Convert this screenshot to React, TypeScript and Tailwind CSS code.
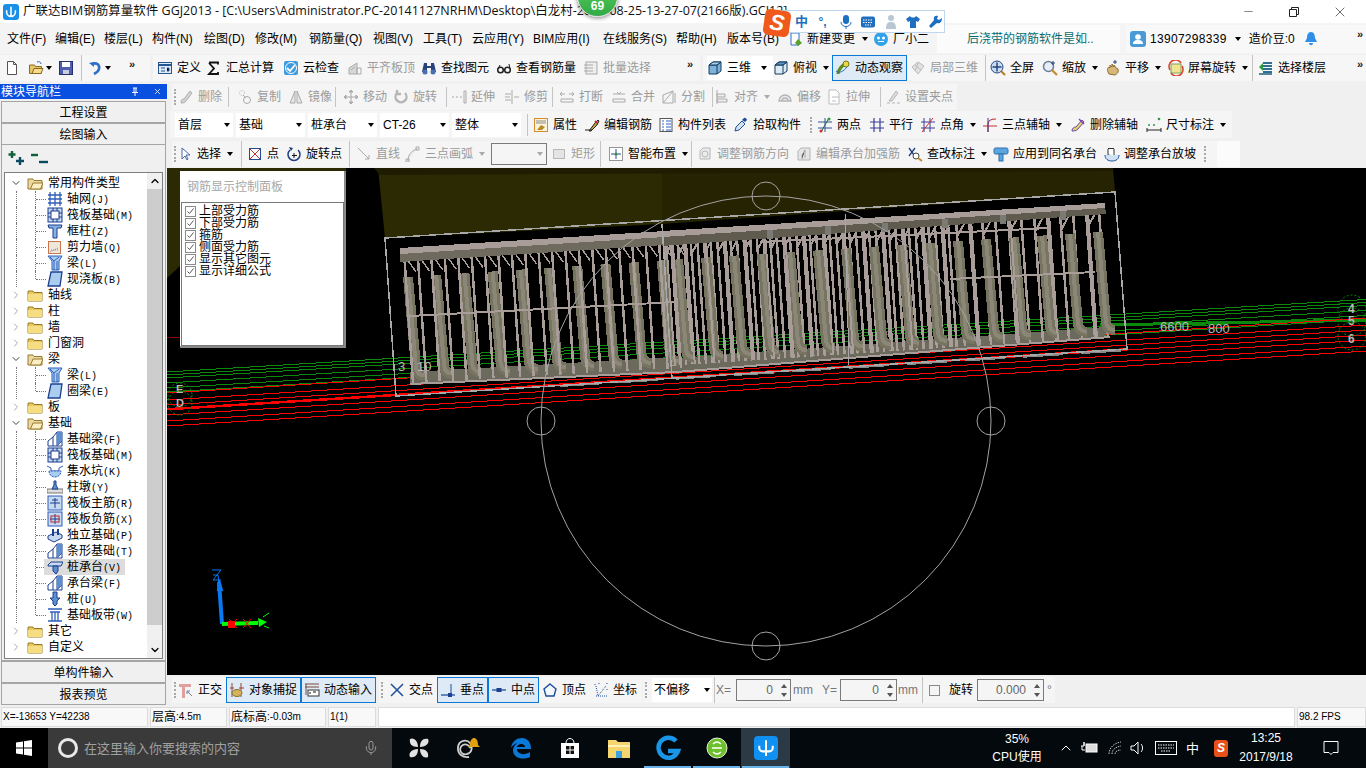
import type { ReactNode } from 'react';
import clsx from 'clsx';
import { ChevronDown, ChevronRight, ChevronUp, Mic, Minus, X } from 'lucide-react';

const B = '#2f5fb8';
const D = '#1b3f8f';

// 16x16 toolbar and tree pictures
const icons: Record<string, ReactNode> = {
  doc: <path d="M3.500 1.500h6l3 3v10h-9zM9.500 1.500v3h3" fill="#fff" stroke="#555" />,
  open: <><path d="M1.500 5h5l1 1.500h6v7h-12z" fill="#e8c56a" stroke="#8a6a20" /><path d="M4 13.500l2-5h9l-2 5z" fill="#f7dc8c" stroke="#8a6a20" /><path d="M9 2c2-1 4 0 4 2" stroke={B} fill="none" /></>,
  save: <><rect x="1.500" y="1.500" width="13" height="13" fill="#4f5fae" stroke="#27306f" /><rect x="4" y="2" width="8" height="5" fill="#fff" /><rect x="5" y="10" width="6" height="4" fill="#c9cde0" /></>,
  undo: <><path d="M5 4c5-2 8 1 7 5-.5 2-3 4-5 5" stroke="#2f6fc8" strokeWidth="2.600" fill="none" /><path d="M2 3l5-1v5z" fill="#2f6fc8" /></>,
  define: <><rect x="1.500" y="2.500" width="13" height="11" fill="#dfe9f7" stroke="#26568f" /><path d="M1.500 5h13" stroke="#26568f" strokeWidth="2" /><path d="M4 8h4M4 11h4M10 8h2v3h-2" stroke="#26568f" /></>,
  sigma: <path d="M3 2.500h9v2M12 12v2H3l5-5.500L3 3" fill="none" stroke="#111" strokeWidth="1.800" />,
  cloud: <><rect x="1" y="1" width="14" height="14" rx="2" fill="#3f9be0" /><path d="M4 8l3 3 5-6" stroke="#fff" strokeWidth="1.800" fill="none" /><circle cx="8" cy="8" r="5.500" stroke="#fff" fill="none" /></>,
  flat: <><path d="M2 14V8l8-5v11z" fill="#d8d8d8" stroke="#aaa" /><path d="M10 14V8h4v6zM4 10l4-3" stroke="#aaa" fill="none" /></>,
  bino: <><path d="M3 3h3v3h4V3h3l2 9h-5V8H6v4H1z" fill="#28427a" /><circle cx="4" cy="12" r="2.500" fill="#4a6fb0" /><circle cx="12" cy="12" r="2.500" fill="#4a6fb0" /></>,
  glass: <><circle cx="4.500" cy="10" r="2.800" fill="none" stroke="#222" strokeWidth="1.500" /><circle cx="11.500" cy="10" r="2.800" fill="none" stroke="#222" strokeWidth="1.500" /><path d="M7 9.500h2M2 9l2-4M14 9l-1-5" stroke="#222" /></>,
  batch: <><rect x="3" y="2" width="11" height="12" fill="#eee" stroke="#aaa" /><path d="M1 5h9M1 8h9M1 11h9" stroke="#aaa" /></>,
  cube: <><path d="M2 5l4-3h8v9l-4 3H2z" fill="#7fb2d9" stroke="#123a5e" /><path d="M2 5h8v9M10 5l4-3" fill="none" stroke="#123a5e" /><path d="M2 5l4-3h8l-4 3z" fill="#a8d0ec" stroke="#123a5e" /></>,
  top: <><path d="M2 5l4-3h8v9l-4 3H2z" fill="#dceaf5" stroke="#123a5e" /><path d="M2 5h8v9M10 5l4-3" fill="none" stroke="#123a5e" /><path d="M2 5l4-3h8l-4 3z" fill="#5b93c4" stroke="#123a5e" /></>,
  orbit: <><path d="M3 14c0-5 4-8 8-11" stroke="#5a8f1f" strokeWidth="3" fill="none" /><circle cx="11" cy="4" r="3" fill="#e5d84a" stroke="#7a7a10" /><path d="M1 11c3 3 8 0 11-4" stroke="#2e6db3" fill="none" /></>,
  local: <><path d="M2 7l6-5 6 4-6 8z" fill="#e2e2e2" stroke="#bbb" /><path d="M5 5l6 5M8 3l-3 8" stroke="#bbb" /></>,
  full: <><circle cx="7" cy="7" r="6" fill="#c9dcf3" stroke="#27457e" /><path d="M7 2.500v9M2.500 7h9" stroke="#27457e" strokeWidth="1.500" /><path d="M11 11l4 4" stroke="#b97a20" strokeWidth="2" /></>,
  zoom: <><circle cx="6.500" cy="6.500" r="5" fill="#e7eef7" stroke="#6c7f99" strokeWidth="1.500" /><path d="M10 10l5 5" stroke="#c28c2b" strokeWidth="2.200" /><path d="M11 1v4M9 3h4" stroke="#27457e" /></>,
  pan: <><path d="M4 14c-2-3-2-6 0-7l1 1V5l2 2V4l2 3V5l2 3 2 1c1 3-1 5-3 6z" fill="#d6b97a" stroke="#8a6e35" /><path d="M10 0v4M8 2h4" stroke="#27457e" /></>,
  rotate: <><rect x="3" y="4" width="10" height="9" fill="#f0e391" stroke="#7da65a" /><path d="M2 10a6.500 6.500 0 0 1 11-7M14 6a6.500 6.500 0 0 1-11 7" stroke="#d9412c" strokeWidth="1.500" fill="none" /></>,
  floors: <><path d="M5 3h9M5 6h9M5 9h9M5 12h9" stroke="#2f6f8f" strokeWidth="2" /><path d="M1 7l4-4v8z" fill="#2c9a3f" /><path d="M1 14h13" stroke="#1f5f7f" strokeWidth="1.500" /></>,
  del: <><path d="M3 14c0-3 1-4 3-4l6-8 2 2-6 8c-1 2-3 2-5 2z" fill="#d2d2d2" stroke="#b0b0b0" /></>,
  copy: <><circle cx="5" cy="4" r="2.500" fill="none" stroke="#bbb" strokeDasharray="1 1" /><circle cx="10" cy="11" r="3.500" fill="none" stroke="#aaa" /><path d="M6 6l3 3" stroke="#aaa" /></>,
  mirror: <path d="M7 2L2 14h5zM9 2l5 12H9z" fill="#e6e6e6" stroke="#aaa" />,
  move: <path d="M8 1v14M1 8h14M8 1L6 3h4zM8 15l-2-2h4zM1 8l2-2v4zM15 8l-2-2v4z" fill="#bbb" stroke="#aaa" />,
  spin: <path d="M4 4a5.500 5.500 0 1 0 8 0M4 1v4h4" fill="none" stroke="#b5b5b5" strokeWidth="2.400" />,
  extend: <path d="M1 8h2M5 8h2M9 8h2M13 2h2v12h-2z" stroke="#aaa" fill="#f2f2f2" />,
  trim: <path d="M1 8h5M10 8h5M8 1v14M1 5h6M1 11h6" stroke="#aaa" fill="none" />,
  brk: <path d="M2 5h4M10 5h4M3 3L1 5l2 2M13 3l2 2-2 2M2 10h12v3H2z" stroke="#aaa" fill="none" />,
  join: <path d="M2 5h12M6 3l2 2 2-2M2 10h12v3H2z" stroke="#aaa" fill="none" />,
  split: <path d="M2 14V6l10-4v12zM2 14L12 2M14 4v10" stroke="#aaa" fill="none" />,
  align: <path d="M3 1v14M3 5h8v3H3zM3 10h10v3H3z" stroke="#aaa" fill="#eee" />,
  offset: <path d="M2 12a6 6 0 1 1 12 0zM5 12a3 3 0 1 1 6 0" stroke="#b5b5b5" fill="#eee" strokeWidth="1.500" />,
  stretch: <path d="M3 1h7l3 3v11H3zM6 8h7M6 12h4" stroke="#bbb" fill="#fff" />,
  grip: <path d="M2 14h3M7 14h3M12 14h3M4 12l7-10 2 2-6 8z" stroke="#b5b5b5" fill="#ddd" />,
  prop: <><rect x="1.500" y="1.500" width="13" height="13" fill="#fdf4dc" stroke="#d98a2b" /><path d="M3 6h10M3 4l10 0" stroke="#888" /><path d="M4 13l4-5 4 2-3 3z" fill="#b98a2b" /></>,
  edit: <><path d="M1 13h7M5 14l6-8 3-3 1 1-2 4-6 6z" fill="#c4a23a" stroke="#222" /><path d="M11 4l2 2" stroke="#c62828" strokeWidth="2" /></>,
  list: <><rect x="2" y="1.500" width="12" height="13" fill="#fff" stroke="#555" /><path d="M4 4h2M4 7h2M4 10h2M4 13h2M8 4h5M8 7h5M8 10h5M8 13h5" stroke={B} /></>,
  pick: <><path d="M2 14l1-4 6-6 3 3-6 6z" fill="#cfe2f5" stroke="#21509b" /><path d="M9 3l2-2c1-1 3 1 3 2l-2 2z" fill="#21509b" /></>,
  two: <><path d="M1 11h14M1 5h14" stroke="#36539b" /><path d="M4 15L12 1" stroke="#1c6a2e" /><path d="M8 1v14" stroke="#36539b" /><circle cx="4" cy="14" r="1.500" fill="#d52a2a" /><circle cx="12" cy="2" r="1.500" fill="#2c9a3f" /></>,
  para: <path d="M5 1v14M11 1v14M1 5h14M1 11h14" stroke="#3d3d9a" strokeWidth="1.200" />,
  ang: <><path d="M4 1v14M10 1v14M1 5h14M1 11h14" stroke="#3d3d9a" fill="none" /><path d="M2 15L13 1" stroke="#d52a2a" /></>,
  arc3: <><path d="M6 15V7c0-3 3-5 8-5M1 9h14" stroke="#c53232" fill="none" strokeWidth="1.200" /><path d="M6 1v14" stroke="#3d3d9a" /></>,
  delaxis: <><path d="M2 14c0-3 2-4 4-4l6-7 2 2-6 7c-2 2-4 2-6 2z" fill="#e6ce7e" stroke="#5e4fa0" /><path d="M9 2l5 5" stroke="#8a3fb5" strokeWidth="1.500" /></>,
  dim: <><path d="M1 11v4M15 11v4M1 13h14" stroke="#222" /><circle cx="3" cy="8" r="1" fill="#2c9a3f" /><circle cx="8" cy="8" r="1" fill="#2c9a3f" /><circle cx="13" cy="2" r="1.300" fill="#2c9a3f" /></>,
  cursor: <path d="M5 2v11l3-3 2 4 1-1-2-4h4z" fill="#fff" stroke="#4b6ca8" />,
  pt: <><rect x="2.500" y="2.500" width="11" height="11" fill="#fff" stroke="#2a4a94" /><path d="M3 3l10 10M13 3L3 13" stroke="#c53232" /></>,
  rotpt: <><path d="M4 4a6 6 0 1 0 8 0" stroke="#1f3f80" fill="none" strokeWidth="1.500" /><path d="M8 7v5M6 9.500h5" stroke="#111" /><path d="M3 1l2 4 2-3z" fill="#1f3f80" /></>,
  line: <path d="M2 2l11 11M13 13V9M13 13H9" stroke="#aaa" fill="none" />,
  arc: <path d="M3 15c0-6 3-10 9-12M11 1h3v3h-3zM1 13h3v3H1z" stroke="#aaa" fill="#eee" />,
  rect: <rect x="2.500" y="3.500" width="11" height="9" fill="#e4e4e4" stroke="#b8b8b8" />,
  smart: <><rect x="1.500" y="1.500" width="13" height="13" fill="#fff" stroke="#333" strokeDasharray="1 1" /><path d="M8 3v10M3 8h10" stroke="#2a4a94" /><circle cx="8" cy="8" r="1.500" fill="#2c9a3f" /></>,
  adj: <><path d="M3 5l3-3h7v11H3z" fill="#ececec" stroke="#b5b5b5" /><circle cx="8" cy="8" r="3" fill="none" stroke="#b5b5b5" /></>,
  adj2: <><path d="M2 5l3-3h9v12H2z" fill="#e5e5e5" stroke="#b5b5b5" /><path d="M9 4L6 9v4M9 4v8" stroke="#aaa" /></>,
  check: <><path d="M2 2l5 7M8 2L2 10" stroke="#1f3f80" strokeWidth="1.300" /><circle cx="9" cy="10" r="3" fill="#fff" stroke="#444" /><path d="M11 12l4 3" stroke="#c28c2b" strokeWidth="2" /></>,
  apply: <><rect x="1" y="2" width="14" height="6" rx="1.500" fill="#5ba6e0" stroke="#2f6fa8" /><rect x="6" y="8" width="4" height="7" fill="#5ba6e0" stroke="#2f6fa8" /></>,
  slope: <><path d="M4 9V3l1-1 1 1 1-1 1 1 1-1 1 1v7z" fill="#fff" stroke="#333" /><path d="M1 9c0 4 3 6 7 6s7-2 7-6" fill="#cfe2f5" stroke="#21509b" /></>,
  ortho: <><path d="M1 2h12v3H7v11H4V5H1z" fill="#e0a0a0" /><path d="M9 9l5 5M9 9h3M9 9v3" stroke="#6e7fa0" /></>,
  snap: <><path d="M3 1v14M12 1v14" stroke="#8a4a2a" /><ellipse cx="8" cy="11" rx="5" ry="3.500" fill="#d4b35a" stroke="#8a6e35" /><path d="M1 6h4M10 6h5" stroke="#b03030" /></>,
  dyn: <><path d="M1 2h14M1 5h14M2 2v11" stroke="#7a4a3a" fill="none" /><rect x="4" y="8" width="11" height="6" fill="#fff" stroke="#333" /><path d="M6 10v2M9 10h3" stroke="#111" /></>,
  cross: <path d="M2 2l12 12M14 2L2 14" stroke="#1c4f9c" strokeWidth="1.500" />,
  perp: <><path d="M1 13h14" stroke="#1c4f9c" strokeWidth="1.300" /><path d="M11 2v13" stroke="#1c4f9c" /><rect x="8" y="11" width="4" height="4" fill="#1c3f90" /></>,
  mid: <><path d="M1 8h14" stroke="#1c4f9c" strokeWidth="1.300" /><rect x="5.500" y="6" width="5" height="4" fill="#1c3f90" /></>,
  vert: <path d="M8 2l6 5-2 7H4L2 7z" fill="#f2f7fd" stroke="#1c4f9c" strokeWidth="1.400" />,
  coord: <path d="M2 2v2M6 1v1M14 1v2M14 7v1M3 14h12M5 14l8-10M3 4l2 10" stroke="#1c4f9c" strokeDasharray="1 1" fill="none" />,
  gridBlue: <path d="M1 4h14M1 8h14M1 12h14M3 1v14M8 1v14M13 1v14" stroke={B} strokeWidth="1.300" />,
  raft: <><rect x="1" y="1" width="14" height="14" fill="#c8d9f0" stroke={D} /><rect x="4" y="4" width="8" height="8" fill="#fff" stroke={D} /><path d="M1 6h3M1 10h3M12 6h3M12 10h3M6 1v3M10 1v3M6 12v3M10 12v3" stroke={D} /></>,
  col: <path d="M1 2h14l-1 3H10v10H6V5H2z" fill="#86b2e2" stroke={D} />,
  wall: <><rect x="1.500" y="2.500" width="12" height="12" fill="#efe6dc" stroke="#c9744a" /><path d="M3 13l8-4M4 11h7" stroke="#888" strokeDasharray="1 1" /></>,
  beam: <><path d="M1 1h14l-3 5v9H5V6z" fill="#a9cdf0" stroke={B} /><path d="M7 6v9M10 6v9M3 2l4 4M12 2L7 6" stroke={B} /></>,
  slab: <path d="M4 1h11l-2 14H1z" fill="#a9cdf0" stroke={D} strokeWidth="1.300" />,
  fbeam: <><path d="M1 15V10l5-4 4-5h5v14z" fill="#fff" stroke={D} /><path d="M6 6v9M10 1v14l5-5" stroke={D} fill="none" /><path d="M10 1h5v9l-5 5z" fill="#5d8fcf" /></>,
  pit: <><path d="M0 3l4 2v3h8V5l4-2" fill="none" stroke={B} /><path d="M2 8c0 4 3 6 6 6s6-2 6-6z" fill="#a9cdf0" stroke={B} strokeDasharray="2 1" /></>,
  pier: <><rect x="0" y="10" width="16" height="4" fill="#ddd" stroke="#777" /><path d="M5 10l2-4V2h2v4l2 4z" fill="#5d8fcf" stroke={D} /></>,
  rmain: <><rect x="1" y="1" width="14" height="14" fill="#c8d9f0" stroke={B} /><path d="M3 8h10M8 3v10M5 5h6" stroke={D} /></>,
  rneg: <><rect x="1" y="1" width="14" height="14" fill="#c8d9f0" stroke={B} /><path d="M3 8h10M8 3v10" stroke={D} /><rect x="4" y="5" width="8" height="6" fill="none" stroke="#b03030" /></>,
  iso: <><path d="M1 9l8-4 6 3v3l-8 4-6-3z" fill="#c8d9f0" stroke={D} /><path d="M6 2v7M11 2v6" stroke={D} strokeWidth="2" /></>,
  cap: <><path d="M1 6l3-3h12l-2 4H1z" fill="#c8d9f0" stroke={D} /><path d="M6 7h5v5l-2 3-3-3z" fill="#5d8fcf" stroke={D} /></>,
  pile: <><path d="M6 1h4v6h3l-3 3v3l-2 2-2-2v-3L3 7h3z" fill="#5d8fcf" stroke={D} /></>,
  band: <path d="M1 2h14M1 14h14M3 5h10M5 5v9M11 5v9M8 5v9" stroke={B} strokeWidth="1.300" />,
};

function Ic({ n }: { n: string }) {
  return (
    <svg viewBox="0 0 16 16" className="w-4 h-4 shrink-0">
      {icons[n]}
    </svg>
  );
}

function Caret({ off }: { off?: boolean }) {
  return <span className={clsx('ml-[2px] w-0 h-0 shrink-0 border-x-[3px] border-x-transparent border-t-[4px]', off ? 'border-t-[#aaa]' : 'border-t-black')} />;
}

function Tool({ i, t, w, off, caret, on }: { i: string; t: string; w: string; off?: boolean; caret?: boolean; on?: boolean }) {
  return (
    <div
      className={clsx(
        'flex items-center gap-[4px] shrink-0 h-full whitespace-nowrap',
        w,
        off ? 'text-[#9b9b9b]' : 'text-black',
        on && 'border border-[#0a78d7] bg-[#deeaf6] pl-[2px]',
      )}
    >
      <Ic n={i} />
      <span>{t}</span>
      {caret && <Caret off={off} />}
    </div>
  );
}

function Sep({ w }: { w: string }) {
  return (
    <div className={clsx('shrink-0 h-full', w)}>
      <div className="w-px h-full bg-[#c4c4c4]" />
    </div>
  );
}

function Handle({ w }: { w: string }) {
  return (
    <div className={clsx('shrink-0 flex items-center', w)}>
      <div className="ml-[2px] w-[2px] h-[16px] border-l-2 border-dotted border-[#a8a8a8]" />
    </div>
  );
}

function Combo({ t, w }: { t: string; w: string }) {
  return (
    <div className={clsx('flex items-center justify-between bg-white h-[24px] pl-[3px] pr-[3px] shrink-0', w)}>
      <span>{t}</span>
      <Caret />
    </div>
  );
}

function More({ w }: { w: string }) {
  return <div className={clsx('shrink-0 text-[11px] leading-none font-bold text-[#222] -mt-[8px] text-right', w)}>»</div>;
}

function TitleBar() {
  return (
    <div className="h-[23px] bg-white flex items-center shrink-0 relative overflow-hidden">
      <div className="ml-[3px] w-[16px] h-[16px] rounded-[3px] bg-[#1a8fe8] flex items-center justify-center">
        <svg viewBox="0 0 16 16" className="w-[14px] h-[14px]">
          <path d="M8 2v12M3 6v2a3 3 0 0 0 10 0V6" stroke="#fff" strokeWidth="1.800" fill="none" />
        </svg>
      </div>
      <span className="ml-[4px] text-[12.5px] text-[#111] whitespace-nowrap [font-family:'Open_Sans','Noto_Sans_CJK_SC',sans-serif]">
        广联达BIM钢筋算量软件 GGJ2013 - [C:\Users\Administrator.PC-20141127NRHM\Desktop\白龙村-2017-08-25-13-27-07(2166版).GCJ12]
      </span>
      <div className="ml-auto flex items-center text-[#222]">
        <div className="w-[46px] flex justify-center"><Minus size={13} strokeWidth={1} /></div>
        <div className="w-[46px] flex justify-center">
          <svg viewBox="0 0 12 12" className="w-[12px] h-[12px]">
            <path d="M1.500 3.500h7v7h-7zM3.500 3.500v-2h7v7h-2" fill="none" stroke="#222" />
          </svg>
        </div>
        <div className="w-[46px] mr-[3px] flex justify-center"><X size={16} strokeWidth={1} /></div>
      </div>
    </div>
  );
}

const menus: [string, string][] = [
  ['文件(F)', 'w-[48px]'], ['编辑(E)', 'w-[49px]'], ['楼层(L)', 'w-[48px]'], ['构件(N)', 'w-[52px]'],
  ['绘图(D)', 'w-[51px]'], ['修改(M)', 'w-[54px]'], ['钢筋量(Q)', 'w-[64px]'], ['视图(V)', 'w-[50px]'],
  ['工具(T)', 'w-[49px]'], ['云应用(Y)', 'w-[61px]'], ['BIM应用(I)', 'w-[70px]'], ['在线服务(S)', 'w-[73px]'],
  ['帮助(H)', 'w-[51px]'], ['版本号(B)', 'w-[60px]'],
];

function MenuBar() {
  return (
    <div className="h-[31px] bg-[#f4f4f4] flex items-center shrink-0 pl-[7px]">
      {menus.map(([t, w]) => (
        <div key={t} className={clsx('shrink-0 whitespace-nowrap', w)}>{t}</div>
      ))}
      <div className="flex items-center w-[84px] shrink-0 pl-[1px]">
        <svg viewBox="0 0 16 16" className="w-4 h-4 shrink-0">
          <path d="M3 2h8v12H3z" fill="#fff" stroke="#2f6fc8" />
          <path d="M10 8l4 4-4 3-3-3z" fill="#5aa02c" />
        </svg>
        <span className="ml-[3px] whitespace-nowrap">新建变更</span>
        <span className="ml-[5px] flex"><Caret /></span>
      </div>
      <svg viewBox="0 0 16 16" className="w-4 h-4 shrink-0 ml-[2px]">
        <circle cx="8" cy="8" r="7" fill="#31a3e8" />
        <circle cx="5.500" cy="7" r="1.500" fill="#fff" />
        <circle cx="10.500" cy="7" r="1.500" fill="#fff" />
        <path d="M5 10.500h6" stroke="#fff" />
      </svg>
      <span className="ml-[4px] w-[39px] shrink-0">厂小二</span>
      <div className="flex items-center h-[28px] w-[183px] ml-[5px] bg-white/60 text-[#0a6b70] pl-[30px] whitespace-nowrap shrink-0">
        后浇带的钢筋软件是如..
      </div>
      <div className="flex items-center h-[28px] ml-[6px] pl-[4px] bg-[#f8f8f8] w-[240px] shrink-0">
        <svg viewBox="0 0 16 16" className="w-4 h-4 shrink-0">
          <rect width="16" height="16" rx="3" fill="#4a9ad8" />
          <circle cx="8" cy="6" r="2.800" fill="#fff" />
          <path d="M3 13c0-3 2-4 5-4s5 1 5 4z" fill="#fff" />
        </svg>
        <span className="ml-[4px] tracking-[0.3px]">13907298339</span>
        <span className="ml-[6px] flex"><Caret /></span>
        <span className="ml-[8px] whitespace-nowrap">造价豆:0</span>
        <svg viewBox="0 0 16 16" className="w-4 h-4 shrink-0 ml-[8px]">
          <path d="M8 1c3 0 4 3 4 6l2 4H2l2-4c0-3 1-6 4-6zM6 12h4c0 3-4 3-4 0z" fill="#2f8fe8" />
        </svg>
        <More w="ml-auto w-[12px] mr-[3px]" />
      </div>
    </div>
  );
}

function MainToolbar() {
  return (
    <div className="h-[28px] flex items-center shrink-0 bg-[#f0f0f0]">
      <div className="h-[26px] w-[150px] flex items-center bg-[#f6f6f6] pl-[4px] shrink-0">
        <div className="w-[24px]"><Ic n="doc" /></div>
        <Ic n="open" />
        <Caret />
        <div className="ml-[6px] w-[17px]"><Ic n="save" /></div>
        <div className="ml-[6px] w-[6px] h-full"><div className="w-px h-full bg-[#c4c4c4]" /></div>
        <Ic n="undo" />
        <Caret />
        <More w="w-[24px]" />
      </div>
      <div className="h-[26px] ml-[3px] flex items-center bg-[#f6f6f6] pl-[4px] w-[547px] shrink-0">
        <Tool i="define" t="定义" w="w-[49px]" />
        <Tool i="sigma" t="汇总计算" w="w-[77px]" />
        <Tool i="cloud" t="云检查" w="w-[64px]" />
        <Tool i="flat" t="平齐板顶" w="w-[74px]" off />
        <Tool i="bino" t="查找图元" w="w-[75px]" />
        <Tool i="glass" t="查看钢筋量" w="w-[87px]" />
        <Tool i="batch" t="批量选择" w="w-[72px]" off />
        <More w="w-[38px]" />
      </div>
      <div className="h-[26px] ml-[3px] flex items-center bg-[#f6f6f6] pl-[4px] flex-1">
        <div className="flex items-center bg-white h-[24px] w-[66px] shrink-0">
          <Tool i="cube" t="三维" w="w-[52px]" />
          <Caret />
        </div>
        <Tool i="top" t="俯视" w="w-[59px]" caret />
        <Tool i="orbit" t="动态观察" w="w-[75px]" on />
        <div className="w-[3px] shrink-0" />
        <Tool i="local" t="局部三维" w="w-[75px]" off />
        <Sep w="w-[5px]" />
        <Tool i="full" t="全屏" w="w-[52px]" />
        <Tool i="zoom" t="缩放" w="w-[63px]" caret />
        <Tool i="pan" t="平移" w="w-[63px]" caret />
        <Tool i="rotate" t="屏幕旋转" w="w-[84px]" caret />
        <Sep w="w-[6px]" />
        <Tool i="floors" t="选择楼层" w="w-[90px]" />
        <More w="w-[15px]" />
      </div>
    </div>
  );
}

function EditRow() {
  return (
    <div className="h-[28px] shrink-0 pl-[5px] flex items-end">
      <div className="h-[26px] w-[785px] flex items-center bg-[#f5f5f5] py-[3px]">
        <Handle w="w-[6px]" />
        <Tool i="del" t="删除" w="w-[50px]" off />
        <Sep w="w-[9px]" />
        <Tool i="copy" t="复制" w="w-[51px]" off />
        <Tool i="mirror" t="镜像" w="w-[47px]" off />
        <Sep w="w-[8px]" />
        <Tool i="move" t="移动" w="w-[50px]" off />
        <Tool i="spin" t="旋转" w="w-[53px]" off />
        <Sep w="w-[5px]" />
        <Tool i="extend" t="延伸" w="w-[53px]" off />
        <Tool i="trim" t="修剪" w="w-[48px]" off />
        <Sep w="w-[7px]" />
        <Tool i="brk" t="打断" w="w-[52px]" off />
        <Tool i="join" t="合并" w="w-[50px]" off />
        <Tool i="split" t="分割" w="w-[51px]" off />
        <Sep w="w-[2px]" />
        <Tool i="align" t="对齐" w="w-[63px]" off caret />
        <Tool i="offset" t="偏移" w="w-[49px]" off />
        <Tool i="stretch" t="拉伸" w="w-[54px]" off />
        <Sep w="w-[5px]" />
        <Tool i="grip" t="设置夹点" w="w-[72px]" off />
      </div>
    </div>
  );
}

function SelectRow() {
  return (
    <div className="h-[28px] shrink-0 pl-[3px] flex items-end">
      <div className="h-[27px] w-[638px] flex items-center bg-[#f5f5f5] pl-[5px] shrink-0">
        <div className="flex items-center gap-[3px] shrink-0">
          <Combo t="首层" w="w-[58px]" />
          <Combo t="基础" w="w-[69px]" />
          <Combo t="桩承台" w="w-[69px]" />
          <Combo t="CT-26" w="w-[69px]" />
          <Combo t="整体" w="w-[69px]" />
        </div>
        <div className="w-[6px] shrink-0" />
        <div className="h-[22px] flex items-center"><Sep w="w-[6px]" /></div>
        <Tool i="prop" t="属性" w="w-[51px]" />
        <Tool i="edit" t="编辑钢筋" w="w-[74px]" />
        <Tool i="list" t="构件列表" w="w-[75px]" />
        <Tool i="pick" t="拾取构件" w="w-[75px]" />
      </div>
      <div className="h-[27px] w-[424px] flex items-center bg-[#f5f5f5] shrink-0">
        <Handle w="w-[9px]" />
        <Tool i="two" t="两点" w="w-[52px]" />
        <Tool i="para" t="平行" w="w-[51px]" />
        <Tool i="ang" t="点角" w="w-[62px]" caret />
        <Tool i="arc3" t="三点辅轴" w="w-[88px]" caret />
        <Tool i="delaxis" t="删除辅轴" w="w-[76px]" />
        <Tool i="dim" t="尺寸标注" w="w-[84px]" caret />
      </div>
    </div>
  );
}

function DrawRow() {
  return (
    <div className="h-[30px] shrink-0 pl-[5px] pt-[2px] flex items-center">
      <div className="h-[26px] w-[1045px] flex items-center bg-[#f5f5f5] shrink-0">
        <Handle w="w-[5px]" />
        <Tool i="cursor" t="选择" w="w-[64px]" caret />
        <Sep w="w-[6px]" />
        <Tool i="pt" t="点" w="w-[39px]" />
        <Tool i="rotpt" t="旋转点" w="w-[63px]" />
        <Sep w="w-[7px]" />
        <Tool i="line" t="直线" w="w-[49px]" off />
        <Tool i="arc" t="三点画弧" w="w-[86px]" off caret />
        <div className="w-[56px] h-[22px] border border-[#7a7a7a] flex items-center justify-end pr-[3px] shrink-0"><Caret off /></div>
        <div className="w-[4px] shrink-0" />
        <Tool i="rect" t="矩形" w="w-[49px]" off />
        <Sep w="w-[8px]" />
        <Tool i="smart" t="智能布置" w="w-[83px]" caret />
        <Sep w="w-[6px]" />
        <Tool i="adj" t="调整钢筋方向" w="w-[99px]" off />
        <Tool i="adj2" t="编辑承台加强筋" w="w-[111px]" off />
        <Tool i="check" t="查改标注" w="w-[86px]" caret />
        <Tool i="apply" t="应用到同名承台" w="w-[111px]" />
        <Tool i="slope" t="调整承台放坡" w="w-[98px]" />
        <Handle w="w-[10px]" />
      </div>
      <div className="w-[23px] h-[26px] bg-white/70 shrink-0" />
    </div>
  );
}

type Row = { t: string; k?: string; i?: string; open?: boolean; lvl: 0 | 1; last?: boolean; sel?: boolean };

const tree: Row[] = [
  { t: '常用构件类型', lvl: 0, open: true },
  { t: '轴网', k: '(J)', i: 'gridBlue', lvl: 1 },
  { t: '筏板基础', k: '(M)', i: 'raft', lvl: 1 },
  { t: '框柱', k: '(Z)', i: 'col', lvl: 1 },
  { t: '剪力墙', k: '(Q)', i: 'wall', lvl: 1 },
  { t: '梁', k: '(L)', i: 'beam', lvl: 1 },
  { t: '现浇板', k: '(B)', i: 'slab', lvl: 1, last: true },
  { t: '轴线', lvl: 0 }, { t: '柱', lvl: 0 }, { t: '墙', lvl: 0 }, { t: '门窗洞', lvl: 0 },
  { t: '梁', lvl: 0, open: true },
  { t: '梁', k: '(L)', i: 'beam', lvl: 1 },
  { t: '圈梁', k: '(E)', i: 'slab', lvl: 1, last: true },
  { t: '板', lvl: 0 },
  { t: '基础', lvl: 0, open: true },
  { t: '基础梁', k: '(F)', i: 'fbeam', lvl: 1 },
  { t: '筏板基础', k: '(M)', i: 'raft', lvl: 1 },
  { t: '集水坑', k: '(K)', i: 'pit', lvl: 1 },
  { t: '柱墩', k: '(Y)', i: 'pier', lvl: 1 },
  { t: '筏板主筋', k: '(R)', i: 'rmain', lvl: 1 },
  { t: '筏板负筋', k: '(X)', i: 'rneg', lvl: 1 },
  { t: '独立基础', k: '(P)', i: 'iso', lvl: 1 },
  { t: '条形基础', k: '(T)', i: 'fbeam', lvl: 1 },
  { t: '桩承台', k: '(V)', i: 'cap', lvl: 1, sel: true },
  { t: '承台梁', k: '(F)', i: 'fbeam', lvl: 1 },
  { t: '桩', k: '(U)', i: 'pile', lvl: 1 },
  { t: '基础板带', k: '(W)', i: 'band', lvl: 1, last: true },
  { t: '其它', lvl: 0 },
  { t: '自定义', lvl: 0 },
];

function Folder({ open }: { open?: boolean }) {
  return (
    <svg viewBox="0 0 16 16" className="w-4 h-4 shrink-0">
      <path d="M1 4h5l1 1.500h8V14H1z" fill={open ? '#ecd9a0' : '#e9c65f'} stroke="#9a7a2c" />
      {open ? <path d="M3.500 14L6 8h10l-2.500 6z" fill="#fbeec2" stroke="#9a7a2c" /> : <path d="M1 7h14v7H1z" fill="#f6dc83" />}
    </svg>
  );
}

function TreeRow({ r }: { r: Row }) {
  if (r.lvl === 1) {
    return (
      <div className="h-4 flex items-center relative">
        <div className="absolute left-[11px] top-0 h-full border-l border-dotted border-[#777]" />
        <div className={clsx('absolute left-[30px] top-0 border-l border-dotted border-[#777]', r.last ? 'h-[8px]' : 'h-full')} />
        <div className="absolute left-[31px] top-[8px] w-[10px] border-t border-dotted border-[#777]" />
        {r.sel && <div className="absolute left-[39px] top-0 w-[81px] h-4 bg-[#dcdcdc]" />}
        <div className="ml-[42px] flex items-center h-4 gap-[4px] shrink-0 relative">
          <Ic n={r.i!} />
          <span className="whitespace-nowrap">
            {r.t}
            <span className="text-[10px] [font-family:'Liberation_Mono',monospace]">{r.k}</span>
          </span>
        </div>
      </div>
    );
  }
  const Chev = r.open ? ChevronDown : ChevronRight;
  return (
    <div className="h-4 flex items-center">
      <div className="w-[22px] pl-[5px] shrink-0">
        <Chev size={12} strokeWidth={2} className={r.open ? 'text-[#444]' : 'text-[#a8a8a8]'} />
      </div>
      <Folder open={r.open} />
      <span className="ml-[5px] whitespace-nowrap">{r.t}</span>
    </div>
  );
}

function PanelBtn({ t }: { t: string }) {
  return <div className="h-[22px] mx-[1px] pt-[1px] border border-[#a5a5a5] bg-[#f0f0f0] flex items-center justify-center shrink-0">{t}</div>;
}

function LeftPanel() {
  return (
    <div className="w-[167px] shrink-0 flex flex-col pt-[2px]">
      <div className="h-[15px] bg-[#0a50e0] text-white flex items-center pl-[1px] shrink-0 text-[12px]">
        <span>模块导航栏</span>
        <svg viewBox="0 0 10 10" className="ml-auto mr-[13px] w-[10px] h-[10px]">
          <path d="M3 1h4M4 1v4M6 1v4M2 5.500h6M5 5.500V9" stroke="#fff" fill="none" />
        </svg>
        <X size={9} className="mr-[5px]" />
      </div>
      <div className="h-[2px] shrink-0" />
      <PanelBtn t="工程设置" />
      <PanelBtn t="绘图输入" />
      <div className="mx-[1px] border border-[#a5a5a5] border-t-0 bg-[#f0f0f0] flex-1 flex flex-col min-h-0 px-[2px]">
        <div className="h-[27px] shrink-0 flex items-center pl-[3px] gap-[3px]">
          <svg viewBox="0 0 20 20" className="w-[20px] h-[20px]">
            <path d="M5 2v7M1.500 5.500h7" stroke="#0f5f3a" strokeWidth="2.400" />
            <path d="M13 8v8M9 12h8" stroke="#0a4a5f" strokeWidth="2.400" />
          </svg>
          <svg viewBox="0 0 20 20" className="w-[20px] h-[20px]">
            <path d="M1 6h7" stroke="#0f5f3a" strokeWidth="2.400" />
            <path d="M9 13h9" stroke="#0a4a5f" strokeWidth="2.400" />
          </svg>
        </div>
        <div className="flex-1 min-h-0 flex border border-[#7f7f7f] bg-white overflow-hidden">
          <div className="flex-1 min-w-0 overflow-hidden pt-[2px]">
            {tree.map((r, idx) => (
              <TreeRow key={idx} r={r} />
            ))}
          </div>
          <div className="w-[15px] shrink-0 flex flex-col bg-[#f0f0f0]">
            <div className="h-[16px] flex items-center justify-center"><ChevronUp size={12} strokeWidth={2.500} /></div>
            <div className="flex-1 bg-[#cdcdcd]" />
            <div className="h-[17px] mt-[16px] flex items-center justify-center"><ChevronDown size={12} strokeWidth={2.500} /></div>
          </div>
        </div>
        <div className="h-[1px] shrink-0" />
      </div>
      <PanelBtn t="单构件输入" />
      <PanelBtn t="报表预览" />
    </div>
  );
}

const leftTubes = Array.from({ length: 10 }, (_, i) => 408 + i * 28.2);
const rightTubes = Array.from({ length: 16 }, (_, i) => 678 + i * 28);
const leftBars = Array.from({ length: 21 }, (_, i) => 404 + i * 13.4);
const rightBars = [
  ...Array.from({ length: 44 }, (_, i) => 664 + i * 6.6),
  ...Array.from({ length: 12 }, (_, i) => 956 + i * 13),
];

const topL = (x: number) => 252 - (x - 400) * 0.064;
const botL = (x: number) => 383 - (x - 410) * 0.056;
const topR = (x: number) => 236 - (x - 662) * 0.0645;
const botR = (x: number) => 360 - (x - 760) * 0.066;
const red = [393, 400, 405, 410, 415, 421, 426];
const green = [372, 375, 378, 383, 388, 392];

function Cage() {
  const st = { stroke: '#a89d98', fill: 'none' };
  const tube = (x: number, i: number) => {
    const isLeft = i < leftTubes.length;
    const yt = 277 - (x - 408) * 0.0653;
    const yb = (isLeft ? botL(x + 12) : botR(x + 12)) - 7;
    const d = `M${x} ${yt} L${x + 8} ${yb - 8} Q${x + 9} ${yb} ${x + 17} ${yb}`;
    return (
      <g key={x}>
        <path d={d} fill="none" stroke="#77745f" strokeWidth={10} />
        <path d={d} fill="none" stroke="#8a8779" strokeWidth={4} />
      </g>
    );
  };
  return (
    <g shapeRendering="crispEdges">
      <polygon points="410,372 676,357 676,372 410,384" fill="#6b6a5c" />
      <polygon points="676,358 1106,327 1106,338 676,372" fill="#6b6a5c" />
      {rightBars.map((x, i) => (
        <g key={i}>
          <line x1={x} y1={topR(x) + 3} x2={x + 9} y2={botR(x + 9)} strokeWidth={2.500} {...st} />
          {i % 2 === 0 && <line x1={x + 1} y1={topR(x) + 20} x2={x + 9} y2={topR(x) + 5} strokeWidth={2} {...st} />}
        </g>
      ))}
      {[...leftTubes, ...rightTubes].map(tube)}
      {leftBars.map((x, i) => (
        <g key={i}>
          <line x1={x} y1={topL(x)} x2={x + 9} y2={botL(x + 9)} strokeWidth={2.500} {...st} />
          <line x1={x + 12} y1={topL(x) + 20} x2={x + 2} y2={topL(x) + 6} strokeWidth={1.500} {...st} />
        </g>
      ))}
      {rightBars.map((x, i) =>
        i % 3 === 0 ? <line key={i} x1={x + 2} y1={topR(x) + 3} x2={x + 11} y2={botR(x + 11)} strokeWidth={2} {...st} /> : null,
      )}
      <line x1={410} y1={316} x2={675} y2={302} stroke="#a89d98" strokeWidth={2} />
      <line x1={950} y1={279} x2={1095} y2={272} stroke="#a89d98" strokeWidth={2} />
      <line x1={760} y1={242} x2={1050} y2={228} stroke="#a89d98" strokeWidth={2} />
      <polygon points="400,251 680,233 680,244 400,262" fill="#6e6b5e" />
      <polygon points="400,248 680,230 680,236 400,254" fill="#a89d98" />
      <polygon points="662,234 1105,205 1106,214 662,246" fill="#5f5c4f" />
      <polygon points="662,231 1105,203 1105,208 662,237" fill="#a89d98" />
      {[770, 828, 885, 945, 1003, 1063].map((x) => (
        <rect key={x} x={x - 3} y={235 - (x - 770) * 0.0645 - 5} width={6} height={9} fill="#7c7a74" />
      ))}
      <line x1={410} y1={384} x2={676} y2={372} stroke="#a89d98" strokeWidth={2} />
      <line x1={676} y1={372} x2={1110} y2={337} stroke="#a89d98" strokeWidth={2} />
    </g>
  );
}

function Scene() {
  return (
    <svg viewBox="167 168 1199 507" className="w-full h-full block">
      <polygon points="167,168 346,168 346,172 180,266 167,278" fill="#2c2a03" />
      <polygon points="378,168 662,168 662,224 385,238" fill="#2c2a03" />
      <polygon points="662,168 1113,168 1115,192 662,224" fill="#252302" />
      <polygon points="374,168 1113,168 1113,171 380,175" fill="#1e1d02" />
      <g shapeRendering="crispEdges">
        <line x1={167} y1={338} x2={180} y2={337} stroke="#8a0000" />
        {green.map((y) => (
          <line key={y} x1={167} y1={y} x2={1366} y2={y - 1199 * 0.0605} stroke="#0a8a0a" />
        ))}
        <line x1={1100} y1={325} x2={1366} y2={320} stroke="#0a8a0a" strokeWidth={3} />
        {red.map((y) => (
          <line key={y} x1={167} y1={y} x2={1366} y2={y - 1199 * 0.0625} stroke="#ff0000" />
        ))}
        <line x1={167} y1={409} x2={1127} y2={349} stroke="#ff0000" strokeWidth={2} />
        <line x1={560} y1={386} x2={1130} y2={350} stroke="#8a8a8a" strokeWidth={2} strokeDasharray="40 18" />
      </g>
      <Cage />
      <g fill="none" stroke="#a8a8a8" shapeRendering="crispEdges">
        <polygon points="385,238 1115,192 1127,349 396,396" strokeWidth={1.500} />
        <line x1={662} y1={224} x2={672} y2={379} strokeWidth={1.500} />
        <line x1={845} y1={213} x2={849} y2={365} />
      </g>
      <g fill="none" stroke="#a2a2a2">
        <circle cx={766} cy={421} r={225} />
        <circle cx={766} cy={196} r={14} />
        <circle cx={766} cy={646} r={14} />
        <circle cx={541} cy={421} r={14} />
        <circle cx={991} cy={421} r={14} />
      </g>
      <g fontFamily="'Liberation Sans',sans-serif" fontSize="13" fill="#b8b8b8">
        <text x={1160} y={331}>6600</text>
        <text x={1208} y={333}>800</text>
        <text x={398} y={371}>3</text>
        <text x={417} y={371}>10</text>
        <text x={176} y={393} fontSize="11" fontWeight="bold">E</text>
        <text x={176} y={407} fontSize="11" fontWeight="bold">D</text>
        <text x={1348} y={313} fontSize="12" fontWeight="bold">4</text>
        <text x={1348} y={325} fontSize="12" fontWeight="bold">5</text>
        <text x={1348} y={343} fontSize="12" fontWeight="bold">6</text>
      </g>
      <g fill="none" stroke="#0a8a0a" strokeDasharray="2 2">
        <circle cx={180} cy={395} r={12} />
        <circle cx={180} cy={403} r={12} />
        <circle cx={1352} cy={309} r={14} />
        <circle cx={1352} cy={322} r={14} />
        <circle cx={1352} cy={336} r={14} />
      </g>
      {/* axis gizmo */}
      <path d="M219 582l-1-7h-5M212 570h9l-8 10h8" stroke="#0a78f0" fill="none" />
      <path d="M222 624l-3-42" stroke="#0a78f0" strokeWidth={4} />
      <path d="M218 590l1-10 3 10z" fill="#0a78f0" stroke="#0a78f0" strokeWidth={2} />
      <path d="M222 624l36-1" stroke="#00ff00" strokeWidth={4} />
      <path d="M258 618l9 4-8 5z" fill="#00ff00" />
      <path d="M263 617l6-4M264 626l5 2" stroke="#00ff00" />
      <path d="M229 619l8 9M237 619l-8 9M243 619l8 9M251 619l-8 9" stroke="#ff0000" />
      <rect x={228} y={621} width={7} height={7} fill="#ff0000" />
    </svg>
  );
}

const checks = ['上部受力筋', '下部受力筋', '箍筋', '侧面受力筋', '显示其它图元', '显示详细公式'];

function RebarPanel() {
  return (
    <div className="absolute left-[13px] top-[3px] w-[166px] h-[177px] bg-white border-r-2 border-b-2 border-[#8a8a8a] flex flex-col">
      <div className="h-[31px] pl-[7px] flex items-center text-[#a8a8a8] shrink-0">钢筋显示控制面板</div>
      <div className="flex-1 border border-[#777] ml-[1px] pt-[2px] pl-[3px]">
        {checks.map((c) => (
          <div key={c} className="flex items-center h-[12px] gap-[3px] leading-none">
            <div className="w-[11px] h-[11px] border border-[#8a8a8a] shrink-0 flex items-center justify-center">
              <svg viewBox="0 0 9 9" className="w-[9px] h-[9px]">
                <path d="M1.500 4.500l2 2 4-5" stroke="#555" fill="none" />
              </svg>
            </div>
            <span className="whitespace-nowrap">{c}</span>
          </div>
        ))}
      </div>
    </div>
  );
}

function NumBox({ v, w }: { v: string; w: string }) {
  return (
    <div className={clsx('h-[22px] border border-[#7a7a7a] flex items-center justify-end shrink-0 text-[#666]', w)}>
      <span className="mr-[5px]">{v}</span>
      <div className="w-[12px] flex flex-col items-center gap-[5px] shrink-0">
        <span className="w-0 h-0 border-x-[3px] border-x-transparent border-b-[4px] border-b-[#555]" />
        <span className="w-0 h-0 border-x-[3px] border-x-transparent border-t-[4px] border-t-[#555]" />
      </div>
    </div>
  );
}

function BottomBar() {
  return (
    <div className="h-[30px] shrink-0 flex items-center pl-[5px] bg-[#f0f0f0]">
      <div className="h-[26px] w-[204px] bg-[#f5f5f5] flex items-center shrink-0">
        <Handle w="w-[6px]" />
        <Tool i="ortho" t="正交" w="w-[48px]" />
        <Tool i="snap" t="对象捕捉" w="w-[75px]" on />
        <Tool i="dyn" t="动态输入" w="w-[75px]" on />
      </div>
      <div className="h-[26px] w-[263px] ml-[3px] bg-[#f5f5f5] flex items-center shrink-0">
        <Handle w="w-[10px]" />
        <Tool i="cross" t="交点" w="w-[48px]" />
        <Tool i="perp" t="垂点" w="w-[51px]" on />
        <Tool i="mid" t="中点" w="w-[51px]" on />
        <div className="w-[3px] shrink-0" />
        <Tool i="vert" t="顶点" w="w-[51px]" />
        <Tool i="coord" t="坐标" w="w-[49px]" />
      </div>
      <div className="h-[26px] w-[412px] ml-[1px] bg-[#f5f5f5] flex items-center shrink-0">
        <Handle w="w-[9px]" />
        <div className="w-[60px] h-[24px] bg-white flex items-center pl-[2px] shrink-0 justify-between pr-[2px]">
          <span>不偏移</span>
          <Caret />
        </div>
        <div className="w-[2px] shrink-0" />
        <Sep w="w-[2px]" />
        <span className="w-[20px] text-[#777] shrink-0">X=</span>
        <NumBox v="0" w="w-[55px]" />
        <span className="ml-[2px] w-[29px] text-[#777] shrink-0">mm</span>
        <span className="w-[18px] text-[#777] shrink-0">Y=</span>
        <NumBox v="0" w="w-[57px]" />
        <span className="ml-[1px] w-[24px] text-[#777] shrink-0">mm</span>
        <Sep w="w-[7px]" />
        <div className="w-[11px] h-[11px] border border-[#8a8a8a] shrink-0" />
        <span className="ml-[9px] w-[28px] shrink-0">旋转</span>
        <NumBox v="0.000" w="w-[67px]" />
        <span className="ml-[3px] text-[#777]">°</span>
      </div>
    </div>
  );
}

function StatusBar() {
  const cell = 'h-[20px] border border-[#dcdcdc] bg-[#f8f8f8] flex items-center pl-[1px] shrink-0 whitespace-nowrap [font-family:\'Liberation_Mono\',\'Noto_Sans_CJK_SC\',monospace] text-[10px]';
  return (
    <div className="h-[23px] shrink-0 flex items-start gap-[2px] bg-[#f0f0f0] pl-[1px] pt-[2px]">
      <div className={clsx(cell, 'w-[147px]')}>X=-13653 Y=42238</div>
      <div className={clsx(cell, 'w-[77px]')}><span className="text-[12px]">层高</span>:4.5m</div>
      <div className={clsx(cell, 'w-[97px]')}><span className="text-[12px]">底标高</span>:-0.03m</div>
      <div className={clsx(cell, 'w-[48px]')}>1(1)</div>
      <div className={clsx(cell, 'flex-1 bg-white')} />
      <div className={clsx(cell, 'w-[69px]')}>98.2 FPS</div>
    </div>
  );
}

function App2({ children, active, bar }: { children: ReactNode; active?: boolean; bar?: boolean }) {
  return (
    <div className={clsx('w-[49px] h-full shrink-0 flex items-center justify-center relative', active && 'bg-[#2b3a44]')}>
      {children}
      {(bar || active) && <div className="absolute left-[1px] right-[1px] bottom-0 h-[2px] bg-[#6ab2ea]" />}
    </div>
  );
}

function Taskbar() {
  return (
    <div className="h-[40px] shrink-0 bg-[#03090d] flex items-center text-white">
      <div className="w-[48px] h-full bg-black flex items-center justify-center shrink-0">
        <svg viewBox="0 0 16 16" className="w-4 h-4">
          <path d="M0 2.500l7-1v6H0zM8 1.300L16 0v7.500H8zM0 8.500h7v6l-7-1zM8 8.500h8V16l-8-1.300z" fill="#fff" />
        </svg>
      </div>
      <div className="w-[344px] h-full bg-[#3a3a3a] flex items-center shrink-0 pl-[10px]">
        <div className="w-[20px] h-[20px] rounded-full border-[3px] border-[#e8e8e8] shrink-0" />
        <span className="ml-[6px] text-[13px] text-[#a0a0a0] whitespace-nowrap">在这里输入你要搜索的内容</span>
        <Mic size={16} strokeWidth={1.500} className="ml-auto mr-[13px] text-[#999]" />
      </div>
      <div className="ml-[2px] flex items-center h-full shrink-0">
        <App2>
          <svg viewBox="0 0 24 24" className="w-[24px] h-[24px]">
            <path d="M11 11C5 11 2 8 3 3c4-2 8 2 8 8zM13 11c0-6 3-9 8-8 2 4-2 8-8 8zM13 13c6 0 9 3 8 8-4 2-8-2-8-8zM11 13c0 6-3 9-8 8-2-4 2-8 8-8z" fill="#e2e2e2" />
          </svg>
        </App2>
        <App2>
          <svg viewBox="0 0 30 26" className="w-[30px] h-[26px]">
            <path d="M17 13a5 5 0 1 0-3 6c5-1 6-7 3-11S6 5 5 12s5 11 11 10" fill="none" stroke="#cfcfcf" strokeWidth="1.800" />
            <path d="M17 10c0-5 2-7 4-7s4 2 4 7l2 2H15z" fill="#e0a010" />
          </svg>
        </App2>
        <div className="w-[4px] shrink-0" />
        <App2>
          <svg viewBox="0 0 24 24" className="w-[24px] h-[24px]">
            <path d="M2 12C3 5 8 2 13 2c6 0 9 5 9 11H8c0 5 7 7 13 3v5c-6 3-17 2-17-7 0-3 2-5 4-7-3 1-5 3-6 5zm6-1h8c0-4-7-4-8 0z" fill="#0a78d7" />
          </svg>
        </App2>
        <App2>
          <svg viewBox="0 0 24 24" className="w-[24px] h-[24px]">
            <path d="M3 7h18v15H3z" fill="#fff" />
            <path d="M8 7c0-6 8-6 8 0" fill="none" stroke="#fff" />
            <path d="M8 10h3.500v3.500H8zM12.500 10H16v3.500h-3.500zM8 14.500h3.500V18H8zM12.500 14.500H16V18h-3.500z" fill="#111" />
          </svg>
        </App2>
        <App2>
          <svg viewBox="0 0 24 24" className="w-[24px] h-[24px]">
            <path d="M1 4h8l2 2h12v16H1z" fill="#f6d56d" />
            <path d="M1 9h22v2H1z" fill="#fff1b8" />
            <path d="M9 15h6v7H9z" fill="#3aa0e0" />
          </svg>
        </App2>
        <App2 bar>
          <svg viewBox="0 0 26 26" className="w-[26px] h-[26px]">
            <path d="M21 6A10 10 0 1 0 23 16H13" fill="none" stroke="#1a96e8" strokeWidth="4.500" />
          </svg>
        </App2>
        <App2 bar>
          <svg viewBox="0 0 24 24" className="w-[24px] h-[24px]">
            <circle cx="12" cy="12" r="10" fill="#6cc02c" stroke="#e8f5d0" />
            <path d="M7 12h10M8 8c3-3 6-2 8 0M8 16c3 3 6 2 8 0" stroke="#fff" strokeWidth="1.600" fill="none" />
          </svg>
        </App2>
        <App2 active>
          <div className="w-[24px] h-[24px] rounded-[4px] bg-[#1090f0] flex items-center justify-center">
            <svg viewBox="0 0 16 16" className="w-[18px] h-[18px]">
              <path d="M8 1v14M2 6v2a3 3 0 0 0 3 3h6a3 3 0 0 0 3-3V6" stroke="#fff" strokeWidth="1.800" fill="none" />
            </svg>
          </div>
        </App2>
      </div>
      <div className="ml-[202px] w-[50px] flex flex-col items-center text-[12px] leading-[18px] shrink-0">
        <span>35%</span>
        <span className="whitespace-nowrap">CPU使用</span>
      </div>
      <ChevronUp size={16} strokeWidth={1.500} className="ml-[16px] shrink-0" />
      <svg viewBox="0 0 18 14" className="ml-[6px] w-[18px] h-[14px] shrink-0">
        <path d="M1 5h3V1M4 1v4M2 5v4h3" stroke="#fff" fill="none" />
        <rect x="6" y="3" width="11" height="8" fill="#ddd" stroke="#fff" />
      </svg>
      <svg viewBox="0 0 16 16" className="ml-[9px] w-4 h-4 shrink-0">
        <path d="M2 14C2 8 7 3 14 2M5 14c0-4 3-7 9-8M8 14c0-2 2-4 6-4" stroke="#ccc" fill="none" strokeDasharray="1.500 1" />
      </svg>
      <svg viewBox="0 0 16 16" className="ml-[7px] w-4 h-4 shrink-0">
        <path d="M1 6h3l4-4v12l-4-4H1zM11 4c2 2 2 6 0 8" stroke="#fff" fill="none" />
      </svg>
      <svg viewBox="0 0 22 14" className="ml-[9px] w-[22px] h-[14px] shrink-0">
        <rect x="0.500" y="0.500" width="21" height="13" fill="none" stroke="#fff" />
        <path d="M3 4h16M3 7h16M6 10h10" stroke="#fff" strokeDasharray="1.500 1" />
      </svg>
      <span className="ml-[9px] text-[13px] shrink-0">中</span>
      <div className="ml-[15px] w-[14px] h-[17px] rounded-[3px] bg-[#e8501a] flex items-center justify-center text-[12px] font-bold italic leading-none shrink-0">S</div>
      <div className="ml-[3px] w-[70px] flex flex-col items-center text-[12px] leading-[19px] shrink-0">
        <span>13:25</span>
        <span className="whitespace-nowrap">2017/9/18</span>
      </div>
      <svg viewBox="0 0 16 16" className="ml-[22px] w-4 h-4 shrink-0">
        <path d="M1 1.500h14v11H10l-2 2-2-2H1z" fill="none" stroke="#fff" />
      </svg>
    </div>
  );
}

function Sogou() {
  return (
    <div className="absolute left-[771px] top-[10px] w-[174px] h-[23px] bg-white border border-[#c0d6ec] flex items-center text-[#1f6fc0] pl-[23px]">
      <span className="text-[13px] font-bold w-[24px]">中</span>
      <span className="w-[20px] text-[12px] font-bold leading-none">°,</span>
      <svg viewBox="0 0 16 16" className="w-4 h-4 shrink-0">
        <rect x="5" y="1" width="6" height="9" rx="3" fill="#1f6fc0" />
        <path d="M3 8c0 6 10 6 10 0M8 12v3" stroke="#1f6fc0" fill="none" />
      </svg>
      <svg viewBox="0 0 16 16" className="ml-[6px] w-4 h-4 shrink-0">
        <rect x="1" y="2.500" width="14" height="11" rx="2" fill="#1f6fc0" />
        <path d="M3 6h10M3 8.500h10M5 11h6" stroke="#fff" strokeDasharray="1.500 1" />
      </svg>
      <svg viewBox="0 0 16 16" className="ml-[8px] w-4 h-4 shrink-0">
        <circle cx="7" cy="4" r="3" fill="#b9c6d4" />
        <path d="M2 15c0-6 2-7 5-7s5 1 5 7z" fill="#b9c6d4" />
      </svg>
      <svg viewBox="0 0 16 16" className="ml-[5px] w-4 h-4 shrink-0">
        <path d="M5 2L1 5l2 3 2-1v7h6V7l2 1 2-3-4-3c-1 2-5 2-6 0z" fill="#1f6fc0" />
      </svg>
      <svg viewBox="0 0 16 16" className="ml-[7px] w-4 h-4 shrink-0">
        <path d="M14 4l-3 2-2-1 1-3c-3-1-5 1-4 4l-5 6 2 2 6-5c3 1 5-1 5-5z" fill="#1f6fc0" />
      </svg>
      <div className="absolute -left-[8px] -top-[1px] w-[26px] h-[26px] rounded-[5px] bg-[#ef5a1c] rotate-[8deg] text-white flex items-center justify-center text-[22px] font-bold italic leading-none">
        S
      </div>
    </div>
  );
}

export default function App() {
  return (
    <div className="w-[1366px] h-[768px] relative overflow-hidden flex flex-col bg-[#f0f0f0] text-[12px] leading-none text-black [font-family:'Liberation_Sans','Noto_Sans_CJK_SC',sans-serif]">
      <TitleBar />
      <MenuBar />
      <MainToolbar />
      <div className="flex-1 min-h-0 flex">
        <LeftPanel />
        <div className="flex-1 min-w-0 flex flex-col">
          <EditRow />
          <SelectRow />
          <DrawRow />
          <div className="flex-1 min-h-0 bg-black relative overflow-hidden">
            <Scene />
            <RebarPanel />
          </div>
          <BottomBar />
        </div>
      </div>
      <StatusBar />
      <Taskbar />
      <div className="absolute left-[577px] -top-[24px] w-[41px] h-[41px] rounded-full bg-gradient-to-b from-[#5fd35f] to-[#2faa45] shadow-[0_1px_4px_rgba(0,0,0,0.5)] border border-[#d8d8d8] flex items-end justify-center pb-[4px] text-white font-bold text-[12px]">
        69
      </div>
      <Sogou />
    </div>
  );
}
